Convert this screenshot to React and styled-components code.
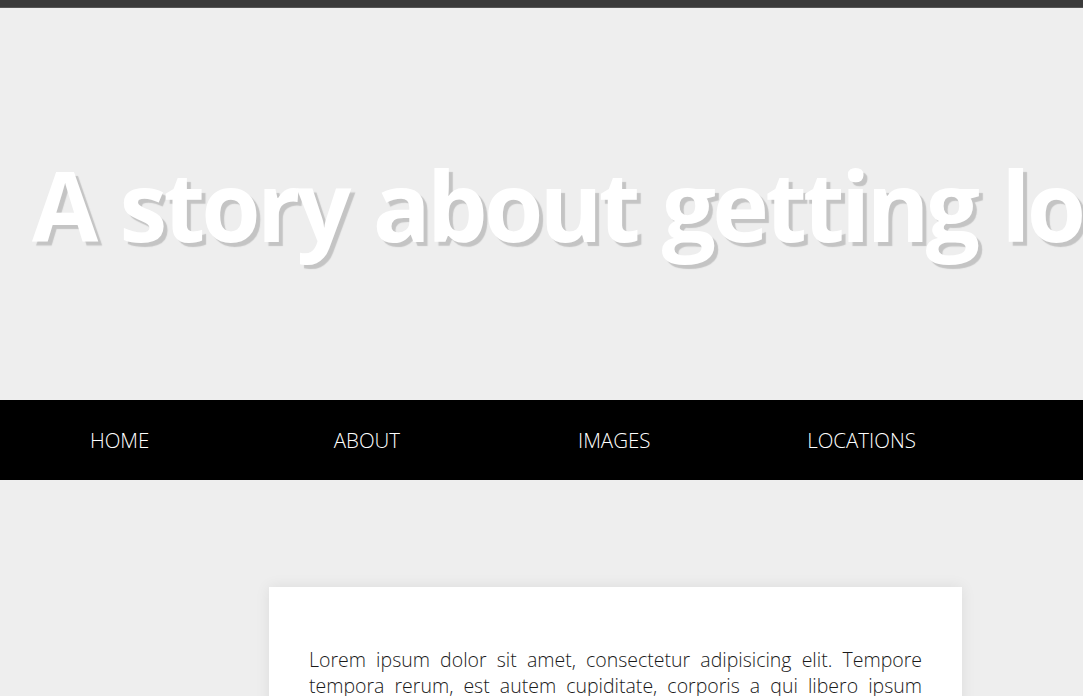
import React from 'react';
import styled, { createGlobalStyle } from 'styled-components';

const GlobalStyle = createGlobalStyle`
  html, body {
    margin: 0;
    padding: 0;
    background: #eeeeee;
    font-family: "Open Sans", "Noto Sans", sans-serif;
    overflow: hidden;
  }
`

const TopBar = styled.div`
  height: 8px;
  background: #3a3a3a;
  border-bottom: 1px solid #555;
  box-sizing: border-box;
`

const Hero = styled.header`
  height: 392px;
  display: flex;
  align-items: center;
  overflow: hidden;
  background: #eeeeee;
`

const Title = styled.h1`
  margin: 0 0 0 32px;
  white-space: nowrap;
  font-size: 96px;
  font-weight: 700;
  letter-spacing: -3.8px;
  word-spacing: 4px;
  color: #ffffff;
  text-shadow: 4px 4px 1px #c4c4c4;
`

const Nav = styled.nav`
  height: 80px;
  background: #000;
  display: flex;
  align-items: center;
  margin-left: -4px;
`

const NavItem = styled.a`
  width: 247.3px;
  text-align: center;
  color: #fff;
  font-size: 20.5px;
  font-weight: 300;
  text-decoration: none;
`

const Main = styled.main`
  padding-top: 107px;
`

const Card = styled.article`
  margin-left: 269px;
  width: 693px;
  box-sizing: border-box;
  padding: 40px;
  background: #fff;
  box-shadow: 0 0 14px rgba(0, 0, 0, 0.08);
`

const Text = styled.p`
  margin: 20px 0;
  font-size: 19.5px;
  line-height: 26px;
  font-weight: 300;
  color: #1a1a1a;
  text-align: justify;
`

const links = ['HOME', 'ABOUT', 'IMAGES', 'LOCATIONS'];

const App = () => (
  <>
    <GlobalStyle />
    <TopBar />
    <Hero>
      <Title>A story about getting lost</Title>
    </Hero>
    <Nav>
      {links.map(l => <NavItem key={l} href="#">{l}</NavItem>)}
    </Nav>
    <Main>
      <Card>
        <Text>
          Lorem ipsum dolor sit amet, consectetur adipisicing elit. Tempore tempora rerum,
          est autem cupiditate, corporis a qui libero ipsum delectus quidem dolor at nulla,
          adipisci veniam in reiciendis aut asperiores omnis blanditiis quod quas laborum
          nam! Fuga ad tempora in aspernatur pariatur fugit quibusdam dolores sunt esse
          magni, ut, dignissimos.
        </Text>
      </Card>
    </Main>
  </>
);

export default App;
